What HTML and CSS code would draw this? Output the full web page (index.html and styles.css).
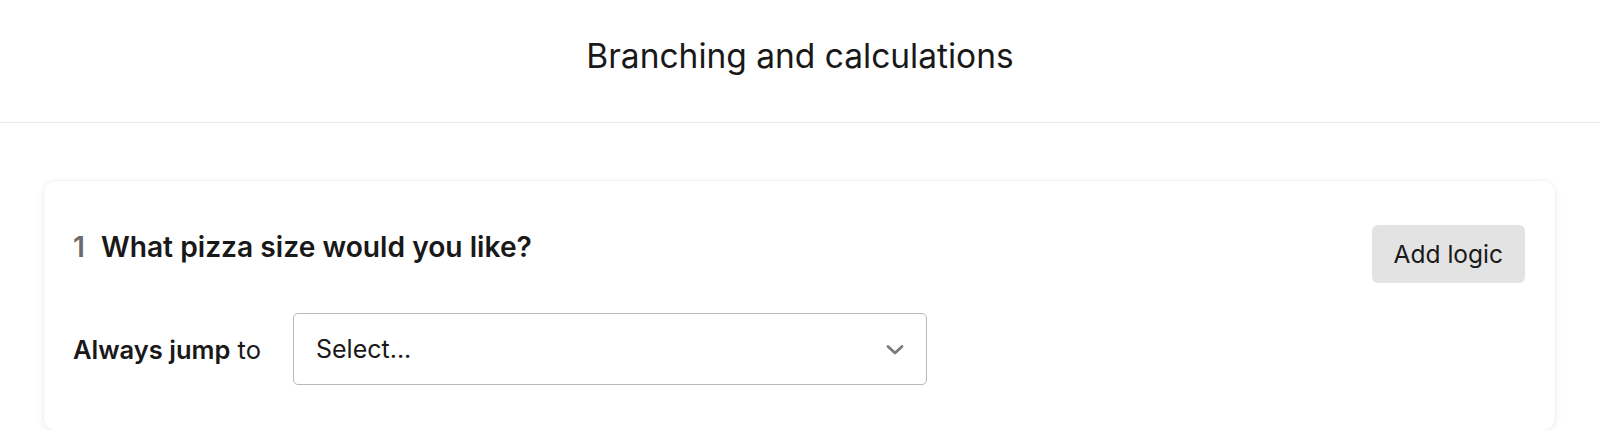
FILE: index.html
```html
<!DOCTYPE html>
<html lang="en">
<head>
    <meta charset="UTF-8">
    <meta name="viewport" content="width=device-width, initial-scale=1.0">
    <title>Branching and calculations</title>
    <link rel="stylesheet" href="styles.css">
</head>
<body>

<header class="top-bar">
    <h1>Branching and calculations</h1>
</header>

<!-- Logic rules -->
<main class="logic-list">
    <div class="logic-card">
        <div class="logic-head">
            <h2 class="question"><span class="question-num">1</span>What pizza size would you like?</h2>
            <button class="add-logic">Add logic</button>
        </div>
        <div class="jump-row">
            <span class="jump-label"><strong>Always jump</strong> to</span>
            <div class="select-box">
                <span>Select...</span>
                <svg class="chevron" width="18" height="12" viewBox="0 0 18 12">
                    <path d="M2 2.5 L9 9 L16 2.5" fill="none" stroke="#7a7a7a" stroke-width="2.8" stroke-linecap="round" stroke-linejoin="round"/>
                </svg>
            </div>
        </div>
    </div>
</main>

</body>
</html>
```

FILE: styles.css
```css
/* Base */
body {
    margin: 0;
    padding: 0;
    background-color: #fff;
    font-family: Inter, "Noto Sans", sans-serif;
    color: #191919;
}

/* Header */
.top-bar {
    height: 122px;
    border-bottom: 1px solid #e8e8e8;
    display: flex;
    align-items: center;
    justify-content: center;
}

.top-bar h1 {
    margin: 0;
    font-size: 33.5px;
    font-weight: 400;
    color: #191919;
    padding-bottom: 10px;
}

/* Logic list */
.logic-list {
    padding: 58px 45px 0 44px;
}

.logic-card {
    background-color: #fff;
    border-radius: 12px;
    box-shadow: 0 0 0 1px rgba(0,0,0,0.025), 0 2px 8px rgba(0,0,0,0.07);
    padding: 44px 30px 45px 29px;
}

.logic-head {
    display: flex;
    justify-content: space-between;
    align-items: flex-start;
}

.question {
    margin: 0;
    padding-top: 5px;
    font-size: 28.2px;
    font-weight: 600;
    line-height: 34px;
    color: #191919;
}

.question-num {
    color: #6b6b6b;
    margin-right: 16px;
}

.add-logic {
    border: none;
    background-color: #e3e3e3;
    border-radius: 6px;
    height: 58px;
    padding: 0 22px;
    font-family: inherit;
    font-size: 24.5px;
    color: #191919;
}

/* Jump row */
.jump-row {
    display: flex;
    align-items: center;
    gap: 32px;
    margin-top: 30px;
}

.jump-label {
    font-size: 25.5px;
    color: #191919;
}

.jump-label strong {
    font-weight: 600;
}

.select-box {
    width: 634px;
    height: 72px;
    border: 1px solid #b8b8b8;
    border-radius: 5px;
    display: flex;
    align-items: center;
    justify-content: space-between;
    padding: 0 22px 0 22px;
    box-sizing: border-box;
    font-size: 25px;
    color: #191919;
}

.select-box .chevron {
    margin-top: 2px;
}
```
